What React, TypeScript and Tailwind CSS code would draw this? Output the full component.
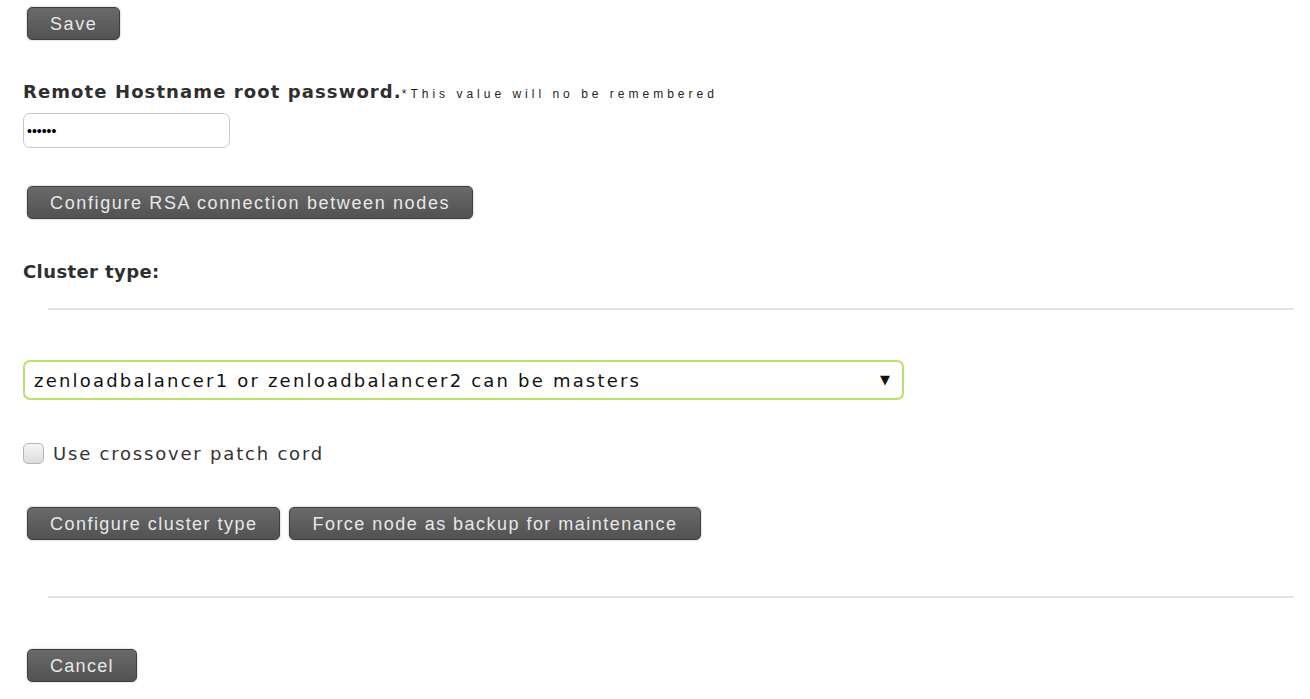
import React, { useState } from 'react';

const btn =
  "h-[33px] px-[22px] rounded-[5px] border border-[#3f3f3f] bg-gradient-to-b from-[#6a6a6a] to-[#525252] text-[#e8e8e8] text-[18px] leading-none whitespace-nowrap shadow-[0_0_2px_rgba(0,0,0,0.35)]";

const App = () => {
  const [crossover, setCrossover] = useState(false);

  return (
    <div className="min-h-[699px] bg-white text-[#333] font-['Liberation_Sans',Arial,sans-serif] pl-[23px] pr-[16px] pt-[7px]">
      <button className={btn + " ml-[4px] tracking-[1.6px]"}>Save</button>

      <div className="mt-[38px] flex items-baseline">
        <span className="font-['DejaVu_Sans',sans-serif] text-[18px] font-bold tracking-[1.1px] text-[#2f2f2f]">Remote Hostname root password.</span>
        <span className="text-[12px] tracking-[4px] text-[#222]">*This value will no be remembered</span>
      </div>
      <input
        type="password"
        defaultValue="zenlb1"
        className="mt-[8px] block w-[207px] h-[35px] px-[3px] rounded-[7px] border border-[#c8c8c8] text-[14px] text-black outline-none"
      />

      <button className={btn + " ml-[4px] mt-[38px] tracking-[1.63px]"}>
        Configure RSA connection between nodes
      </button>

      <div className="mt-[39px] font-['DejaVu_Sans',sans-serif] text-[18px] font-bold tracking-[0.4px] text-[#2f2f2f]">Cluster type:</div>
      <div className="ml-[25px] mt-[23px] h-[2px] bg-[#e2e2e2]" />

      <div className="mt-[50px] w-[881px] h-[40px] rounded-[7px] border-2 border-[#b8e06a] flex items-center justify-between pl-[9px] pr-[12px] font-['DejaVu_Sans',sans-serif] text-[18px] text-[#111] tracking-[2.2px]">
        <span>zenloadbalancer1 or zenloadbalancer2 can be masters</span>
        <span className="text-[13px] tracking-normal">▼</span>
      </div>

      <label className="mt-[40px] flex items-center gap-[9px] cursor-pointer">
        <span
          onClick={() => setCrossover(!crossover)}
          className="w-[21px] h-[21px] rounded-[5px] border border-[#b5b5b5] bg-gradient-to-b from-[#f4f4f4] to-[#dcdcdc]"
        />
        <span className="font-['DejaVu_Sans',sans-serif] text-[18px] text-[#333] tracking-[1.8px]">Use crossover patch cord</span>
      </label>

      <div className="mt-[40px] ml-[4px] flex gap-[9px]">
        <button className={btn + " tracking-[1.47px]"}>Configure cluster type</button>
        <button className={btn + " tracking-[1.47px]"}>Force node as backup for maintenance</button>
      </div>

      <div className="ml-[25px] mt-[56px] h-[2px] bg-[#e2e2e2]" />

      <button className={btn + " ml-[4px] mt-[51px] tracking-[1.3px]"}>Cancel</button>
    </div>
  );
};

export default App;
